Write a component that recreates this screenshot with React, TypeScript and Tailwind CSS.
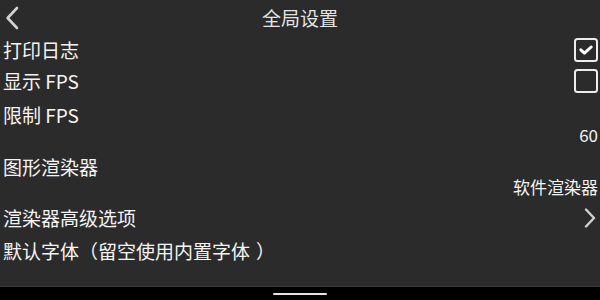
import React from "react";

const font = { fontFamily: '"Noto Sans CJK SC", "Noto Sans", sans-serif' };

function CheckBox({ checked }: { checked: boolean }) {
  return (
    <svg width="24" height="24" viewBox="0 0 24 24" className="shrink-0">
      <rect x="1" y="1" width="22" height="22" rx="2.5" fill="none" stroke="#ececec" strokeWidth="2" />
      {checked && (
        <path d="M6.8 11.8 L10.4 15.2 L17.2 9" fill="none" stroke="#ffffff" strokeWidth="3" strokeLinecap="round" strokeLinejoin="round" />
      )}
    </svg>
  );
}

export default function App() {
  return (
    <div className="w-[600px] h-[300px] flex flex-col bg-black overflow-hidden" style={font}>
      <div className="flex-1 bg-[#2b2b2b] flex flex-col text-[#f4f4f4] border-b border-[#3a3a3a]">
        <div className="h-[36px] grid grid-cols-[1fr_auto_1fr] items-center">
          <div className="pl-[5px] flex items-center">
            <svg width="14" height="24" viewBox="0 0 14 24">
              <path d="M12 2 L2.6 12 L12 22" fill="none" stroke="#d2d2d2" strokeWidth="2.6" strokeLinecap="round" strokeLinejoin="round" />
            </svg>
          </div>
          <div className="text-[19px] leading-[22px] text-[#e4e4e4]">全局设置</div>
          <div />
        </div>

        <div className="h-[28px] flex items-center justify-between pl-[3px] pr-[2px]">
          <span className="text-[19px] leading-[22px]">打印日志</span>
          <CheckBox checked />
        </div>

        <div className="h-[34px] flex items-center justify-between pl-[3px] pr-[2px]">
          <span className="text-[19px] leading-[22px]">显示 FPS</span>
          <CheckBox checked={false} />
        </div>

        <div className="mt-[6px] flex flex-col pl-[3px] pr-[2px]">
          <span className="text-[19px] leading-[22px]">限制 FPS</span>
          <span className="self-end text-[17px] leading-[18px]">60</span>
        </div>

        <div className="mt-[12px] flex flex-col pl-[3px] pr-[2px]">
          <span className="text-[19px] leading-[22px]">图形渲染器</span>
          <span className="self-end text-[17px] leading-[18px]">软件渲染器</span>
        </div>

        <div className="h-[44px] flex items-center justify-between pl-[3px] pr-[4px]">
          <span className="text-[19px] leading-[22px]">渲染器高级选项</span>
          <svg width="12" height="20" viewBox="0 0 12 20">
            <path d="M2 1.5 L10 10 L2 18.5" fill="none" stroke="#d0d0d0" strokeWidth="2.4" strokeLinecap="round" strokeLinejoin="round" />
          </svg>
        </div>

        <div className="pl-[3px] text-[19px] leading-[22px] whitespace-nowrap">
          默认字体<span className="inline-block w-[19px] text-right">（</span>留空使用内置字体<span className="inline-block w-[19px] pl-[6px] text-left">）</span>
        </div>
      </div>
      <div className="h-[13px] shrink-0 bg-black flex justify-center">
        <div className="mt-[6px] w-[54px] h-[2px] bg-[#e6e6e6] rounded-full" />
      </div>
    </div>
  );
}
